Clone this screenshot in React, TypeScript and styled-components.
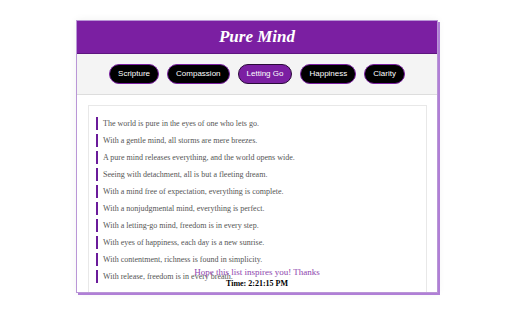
import React from "react";
import styled, { createGlobalStyle } from "styled-components";

const Global = createGlobalStyle`
  html, body { margin: 0; padding: 0; background: #ffffff; }
  body { width: 512px; height: 320px; overflow: hidden; }
`;

const Page = styled.div`
  padding-top: 20px;
  padding-left: 76px;
`;

const Card = styled.div`
  position: relative;
  width: 360px;
  height: 271px;
  border: 1px solid #b996d6;
  box-shadow: 2px 2px 0 #b07fd6, 0 0 8px rgba(0, 0, 0, 0.06);
  background: #ffffff;
  overflow: hidden;
  display: flex;
  flex-direction: column;
`;

const Header = styled.header`
  height: 32px;
  background: #7b1fa2;
  border-bottom: 1px solid #5e1580;
  display: flex;
  align-items: center;
  justify-content: center;
`;

const Title = styled.h1`
  margin: 0;
  font-family: "Liberation Serif", "Times New Roman", serif;
  font-style: italic;
  font-weight: bold;
  font-size: 17px;
  color: #ffffff;
`;

const Nav = styled.nav`
  height: 40px;
  background: #f4f4f4;
  border-bottom: 1px solid #dddddd;
  display: flex;
  align-items: center;
  justify-content: center;
  gap: 8px;
`;

const Pill = styled.button<{ $active?: boolean }>`
  height: 20px;
  padding: 0 8px;
  border-radius: 10px;
  border: 1px solid ${(p) => (p.$active ? "#2a0a3a" : "#7b1fa2")};
  background: ${(p) => (p.$active ? "#7b1fa2" : "#000000")};
  color: #ffffff;
  font-family: "Liberation Sans", Arial, sans-serif;
  font-size: 8px;
  line-height: 18px;
`;

const Body = styled.div`
  flex: 1;
  padding: 10px 10px 0 11px;
  display: flex;
  min-height: 0;
`;

const Panel = styled.div`
  flex: 1;
  border: 1px solid #e8e8e8;
  border-bottom: none;
  background: #ffffff;
  padding: 11px 7px 0;
`;

const List = styled.ul`
  list-style: none;
  margin: 0;
  padding: 0;
  display: flex;
  flex-direction: column;
  gap: 4px;
`;

const Item = styled.li`
  border-left: 2px solid #6a1b9a;
  padding-left: 5px;
  height: 13px;
  line-height: 13px;
  font-family: "Liberation Serif", "Times New Roman", serif;
  font-size: 8px;
  color: #555555;
`;

const Footer = styled.div`
  position: absolute;
  left: 0;
  right: 0;
  bottom: 3px;
  text-align: center;
  font-family: "Liberation Serif", "Times New Roman", serif;
`;

const Thanks = styled.div`
  color: #8e44ad;
  font-size: 9px;
  line-height: 11px;
`;

const Time = styled.div`
  color: #000000;
  font-weight: bold;
  font-size: 8px;
  line-height: 11px;
`;

const tabs = ["Scripture", "Compassion", "Letting Go", "Happiness", "Clarity"];

const items = [
  "The world is pure in the eyes of one who lets go.",
  "With a gentle mind, all storms are mere breezes.",
  "A pure mind releases everything, and the world opens wide.",
  "Seeing with detachment, all is but a fleeting dream.",
  "With a mind free of expectation, everything is complete.",
  "With a nonjudgmental mind, everything is perfect.",
  "With a letting-go mind, freedom is in every step.",
  "With eyes of happiness, each day is a new sunrise.",
  "With contentment, richness is found in simplicity.",
  "With release, freedom is in every breath.",
];

export default function App() {
  return (
    <>
      <Global />
      <Page>
        <Card>
          <Header>
            <Title>Pure Mind</Title>
          </Header>
          <Nav>
            {tabs.map((t) => (
              <Pill key={t} $active={t === "Letting Go"}>
                {t}
              </Pill>
            ))}
          </Nav>
          <Body>
            <Panel>
              <List>
                {items.map((s) => (
                  <Item key={s}>{s}</Item>
                ))}
              </List>
            </Panel>
          </Body>
          <Footer>
            <Thanks>Hope this list inspires you! Thanks</Thanks>
            <Time>Time: 2:21:15 PM</Time>
          </Footer>
        </Card>
      </Page>
    </>
  );
}
